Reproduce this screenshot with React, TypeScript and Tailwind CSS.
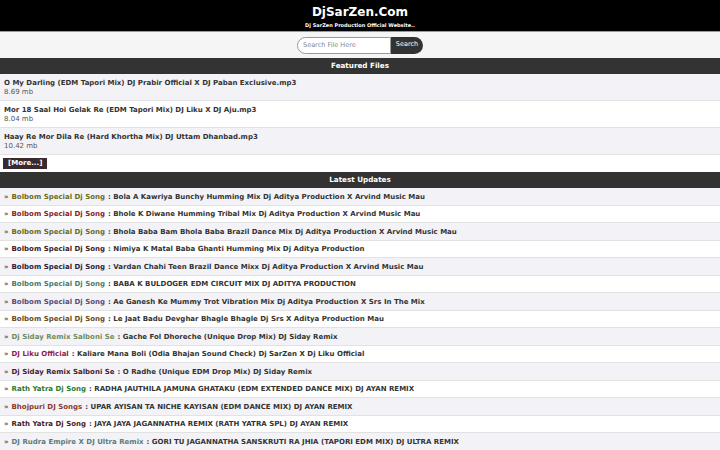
import React from 'react';

type Featured = { title: string; size: string };
type Update = { cat: string; color: string; title: string };

const featured: Featured[] = [
  { title: 'O My Darling (EDM Tapori Mix) DJ Prabir Official X DJ Paban Exclusive.mp3', size: '8.69 mb' },
  { title: 'Mor 18 Saal Hoi Gelak Re (EDM Tapori Mix) DJ Liku X DJ Aju.mp3', size: '8.04 mb' },
  { title: 'Haay Re Mor Dila Re (Hard Khortha Mix) DJ Uttam Dhanbad.mp3', size: '10.42 mb' },
];

const updates: Update[] = [
  { cat: 'Bolbom Special Dj Song', color: 'text-[#6b6b1e]', title: 'Bola A Kawriya Bunchy Humming Mix Dj Aditya Production X Arvind Music Mau' },
  { cat: 'Bolbom Special Dj Song', color: 'text-[#8b1c24]', title: 'Bhole K Diwane Humming Tribal Mix Dj Aditya Production X Arvind Music Mau' },
  { cat: 'Bolbom Special Dj Song', color: 'text-[#6b6b1e]', title: 'Bhola Baba Bam Bhola Baba Brazil Dance Mix Dj Aditya Production X Arvind Music Mau' },
  { cat: 'Bolbom Special Dj Song', color: 'text-[#3c1a28]', title: 'Nimiya K Matal Baba Ghanti Humming Mix Dj Aditya Production' },
  { cat: 'Bolbom Special Dj Song', color: 'text-[#2a2040]', title: 'Vardan Chahi Teen Brazil Dance Mixx Dj Aditya Production X Arvind Music Mau' },
  { cat: 'Bolbom Special Dj Song', color: 'text-[#4d7a68]', title: 'BABA K BULDOGER EDM CIRCUIT MIX DJ ADITYA PRODUCTION' },
  { cat: 'Bolbom Special Dj Song', color: 'text-[#5a4c78]', title: 'Ae Ganesh Ke Mummy Trot Vibration Mix Dj Aditya Production X Srs In The Mix' },
  { cat: 'Bolbom Special Dj Song', color: 'text-[#6a4a1c]', title: 'Le Jaat Badu Devghar Bhagle Bhagle Dj Srs X Aditya Production Mau' },
  { cat: 'Dj Siday Remix Salboni Se', color: 'text-[#6f8c5c]', title: 'Gache Fol Dhoreche (Unique Drop Mix) DJ Siday Remix' },
  { cat: 'DJ Liku Official', color: 'text-[#8c1a4c]', title: 'Kaliare Mana Boli (Odia Bhajan Sound Check) Dj SarZen X Dj Liku Official' },
  { cat: 'Dj Siday Remix Salboni Se', color: 'text-[#4a1a2c]', title: 'O Radhe (Unique EDM Drop Mix) DJ Siday Remix' },
  { cat: 'Rath Yatra Dj Song', color: 'text-[#2a7a2e]', title: 'RADHA JAUTHILA JAMUNA GHATAKU (EDM EXTENDED DANCE MIX) DJ AYAN REMIX' },
  { cat: 'Bhojpuri DJ Songs', color: 'text-[#8a3a28]', title: 'UPAR AYISAN TA NICHE KAYISAN (EDM DANCE MIX) DJ AYAN REMIX' },
  { cat: 'Rath Yatra Dj Song', color: 'text-[#4a1a1e]', title: 'JAYA JAYA JAGANNATHA REMIX (RATH YATRA SPL) DJ AYAN REMIX' },
  { cat: 'DJ Rudra Empire X DJ Ultra Remix', color: 'text-[#5c7c7a]', title: 'GORI TU JAGANNATHA SANSKRUTI RA JHIA (TAPORI EDM MIX) DJ ULTRA REMIX' },
];

const SectionHead = ({ label }: { label: string }) => (
  <div className="h-[16px] bg-[#333333] flex items-center justify-center text-white font-bold text-[7.2px] leading-none">
    {label}
  </div>
);

export default function App() {
  return (
    <div className="w-[720px] h-[450px] overflow-hidden bg-white font-['DejaVu_Sans',sans-serif]">
      {/* site header */}
      <div className="h-[31px] bg-black flex flex-col items-center pt-[5px]">
        <div className="text-white font-bold text-[12px] leading-[15px]">DjSarZen.Com</div>
        <div className="text-white font-bold text-[5px] leading-none mt-[3px]">Dj SarZen Production Official Website..</div>
      </div>

      {/* search */}
      <div className="h-[27px] bg-[#f5f5f5] border-t border-[#999999] flex items-center justify-center">
        <div className="flex h-[17px]">
          <input
            placeholder="Search File Here"
            className="w-[94px] h-full rounded-l-full border border-[#999999] bg-white px-[5px] text-[6.5px] text-[#333] placeholder:text-[#888] outline-none"
          />
          <button className="w-[32px] h-full rounded-r-full bg-[#333333] text-white text-[6.5px]">Search</button>
        </div>
      </div>

      <SectionHead label="Featured Files" />
      {featured.map((f, i) => (
        <div
          key={i}
          className={`h-[27px] border-b border-[#e2e2e2] px-[4px] pt-[2px] flex flex-col justify-center ${i % 2 === 0 ? 'bg-[#f3f3f7]' : 'bg-white'}`}
        >
          <div className="text-[7px] font-bold text-[#333333] leading-[9.5px]">{f.title}</div>
          <div className="text-[7px] text-[#555555] leading-[9.5px]">{f.size}</div>
        </div>
      ))}
      <div className="h-[17px] flex items-center px-[3px]">
        <span className="bg-[#3a2a2e] text-white font-bold text-[7px] leading-[11px] px-[5px]">[More...]</span>
      </div>

      <SectionHead label="Latest Updates" />
      {updates.map((u, i) => (
        <div
          key={i}
          className={`h-[17.5px] border-b border-[#e2e2e2] px-[4px] pt-[1px] flex items-center text-[7px] font-bold text-[#333333] whitespace-nowrap ${i % 2 === 0 ? 'bg-[#f3f3f7]' : 'bg-white'}`}
        >
          <span className="text-[#555555]">»</span>
          <span className={`ml-[3px] ${u.color}`}>{u.cat}</span>
          <span className="ml-[3px]">: {u.title}</span>
        </div>
      ))}
    </div>
  );
}
